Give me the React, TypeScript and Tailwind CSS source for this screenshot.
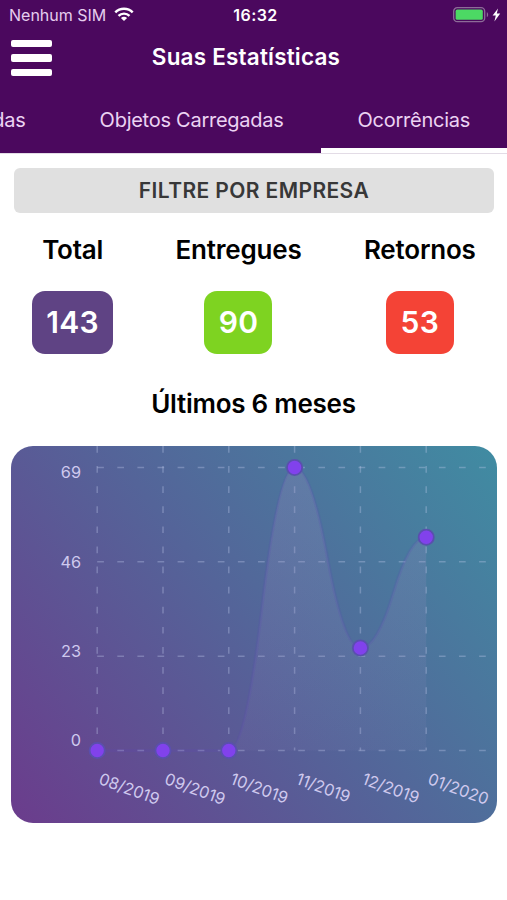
import clsx from 'clsx';

type Stat = { label: string; value: number; width: string; box: string };

const STATS: Stat[] = [
  { label: 'Total', value: 143, width: 'w-[81px]', box: 'w-[81px] bg-[#5f4384]' },
  { label: 'Entregues', value: 90, width: 'w-[126px]', box: 'w-[68px] bg-[#7ed321]' },
  { label: 'Retornos', value: 53, width: 'w-[112px]', box: 'w-[68px] bg-[#f44336]' },
];

const TABS = ['das', 'Objetos Carregadas', 'Ocorrências'];

const MONTHS = [
  { label: '08/2019', value: 0 },
  { label: '09/2019', value: 0 },
  { label: '10/2019', value: 0 },
  { label: '11/2019', value: 69 },
  { label: '12/2019', value: 25 },
  { label: '01/2020', value: 52 },
];

const WIDTH = 486;
const HEIGHT = 377;
const LEFT = 86.2;
const STEP = 65.8;
const TOP = 21.5;
const BASE = 304.5;
const Y_LABELS = [
  { text: '69', y: 32 },
  { text: '46', y: 121.5 },
  { text: '23', y: 210.5 },
  { text: '0', y: 299.5 },
];

const points = MONTHS.map((m, i) => ({
  x: LEFT + i * STEP,
  y: BASE - (m.value / 69) * (BASE - TOP),
}));

function bezierLine() {
  return points.slice(1).reduce((path, next, i) => {
    const prev = points[i];
    const midX = (prev.x + next.x) / 2;
    const midY = (prev.y + next.y) / 2;
    return `${path} Q ${(midX + prev.x) / 2} ${prev.y} ${midX} ${midY} Q ${(midX + next.x) / 2} ${next.y} ${next.x} ${next.y}`;
  }, `M ${points[0].x} ${points[0].y}`);
}

function StatusBar() {
  return (
    <div className="grid h-[30px] grid-cols-3 items-center pr-[5px] pl-[9px] text-[16px] leading-[30px]">
      <div className="flex items-center gap-[9px] text-[#e6cdee]">
        <span className="whitespace-nowrap">Nenhum SIM</span>
        <svg width="20" height="15" viewBox="0 0 20 15" className="-mt-[2px] -ml-[1px] fill-none stroke-white">
          <path d="M1.3 5.4C6 .6 14 .6 18.7 5.4" strokeWidth="2.5" />
          <path d="M4.5 8.8C7.5 5.9 12.5 5.9 15.5 8.8" strokeWidth="2.4" />
          <path d="M10 14 6.9 11C8.6 9.4 11.4 9.4 13.1 11Z" className="fill-white stroke-none" />
        </svg>
      </div>
      <span className="text-center font-semibold tracking-[0.4px] text-white">16:32</span>
      <svg width="50" height="16" viewBox="0 0 50 16" className="-mr-[1px] justify-self-end">
        <rect x=".7" y=".7" width="31" height="14" rx="3.6" fill="none" stroke="#8d6c98" strokeWidth="1.3" />
        <rect x="2.6" y="2.6" width="27.2" height="10.2" rx="1.6" fill="#4cd964" />
        <path d="M33.8 5.3c1.8.6 1.8 4.2 0 4.8Z" fill="#8d6c98" />
        <path d="M45 1.4 39.6 8.4h3.2L41.4 14.4 47.2 6.6h-3.4Z" fill="#fff" />
      </svg>
    </div>
  );
}

function Header() {
  return (
    <header className="flex h-[153px] flex-col overflow-hidden bg-[#4b085e]">
      <StatusBar />
      <div className="grid h-[54px] grid-cols-[52px_1fr_67px] items-center">
        <button type="button" aria-label="Menu" className="mt-[2px] ml-[11px] flex w-[41px] flex-col gap-[7px]">
          <span className="h-[7.5px] rounded-[2px] bg-white" />
          <span className="h-[7.5px] rounded-[2px] bg-white" />
          <span className="h-[7.5px] rounded-[2px] bg-white" />
        </button>
        <h1 className="text-center text-[22.5px] font-semibold tracking-[0.2px] text-white">Suas Estatísticas</h1>
      </div>
      <nav className="flex h-[69px] justify-end">
        {TABS.map((tab, i) => (
          <div
            key={tab}
            className={clsx(
              'flex h-full shrink-0 items-center justify-center border-b-[5px] px-[37px] pt-[8px] text-[20px] tracking-[-0.26px] whitespace-nowrap text-[#ecd3f3]',
              i === TABS.length - 1 ? 'border-white' : 'border-transparent',
            )}
          >
            {tab}
          </div>
        ))}
      </nav>
    </header>
  );
}

function StatColumn({ stat }: { stat: Stat }) {
  return (
    <div className={clsx('flex flex-col items-center gap-[24px]', stat.width)}>
      <h2 className="text-[26px] leading-[34px] font-semibold tracking-[-0.2px] whitespace-nowrap text-black">
        {stat.label}
      </h2>
      <div
        className={clsx(
          'flex h-[63px] items-center justify-center rounded-[13px] text-[30px] font-semibold tracking-[0.3px] text-white',
          stat.box,
        )}
      >
        {stat.value}
      </div>
    </div>
  );
}

function MonthlyChart() {
  const line = bezierLine();
  const last = points[points.length - 1];

  return (
    <svg width={WIDTH} height={HEIGHT} viewBox={`0 0 ${WIDTH} ${HEIGHT}`} className="rounded-[22px]">
      <defs>
        <linearGradient id="background" gradientUnits="userSpaceOnUse" x1="0" y1={HEIGHT} x2={WIDTH} y2="0">
          <stop offset="0" stopColor="#6b3c8c" />
          <stop offset="0.5" stopColor="#546499" />
          <stop offset="1" stopColor="#408ca2" />
        </linearGradient>
        <linearGradient id="area" gradientUnits="userSpaceOnUse" x1="0" y1="0" x2="0" y2={HEIGHT}>
          <stop offset="0" stopColor="#9c8cc0" stopOpacity="0.28" />
          <stop offset="1" stopColor="#9c8cc0" stopOpacity="0.02" />
        </linearGradient>
      </defs>
      <rect width={WIDTH} height={HEIGHT} fill="url(#background)" />

      <g stroke="#c4cdf0" strokeOpacity="0.33" strokeWidth="1.5" strokeDasharray="6.7 13.4">
        {[0, 1, 2, 3].map((i) => {
          const y = TOP + (i * (BASE - TOP)) / 3;
          return <line key={i} x1={LEFT} x2="479" y1={y} y2={y} />;
        })}
        {points.map((p) => (
          <line key={p.x} x1={p.x} x2={p.x} y1="0" y2={BASE} />
        ))}
      </g>

      <path d={`${line} L ${last.x} ${BASE} L ${LEFT} ${BASE} Z`} fill="url(#area)" />
      <path d={line} fill="none" stroke="#6047b5" strokeOpacity="0.18" strokeWidth="3" />

      {points.map((p) => (
        <circle key={p.x} cx={p.x} cy={p.y} r="7.6" fill="#8142ec" stroke="#5a4fae" strokeWidth="1.8" />
      ))}

      <g fill="#cfc9ee" fontSize="16.3">
        {Y_LABELS.map((l) => (
          <text key={l.text} x="70" y={l.y} textAnchor="end">
            {l.text}
          </text>
        ))}
        {points.map((p, i) => (
          <text key={p.x} transform={`translate(${p.x + 0.5} ${BASE + 33}) rotate(20)`}>
            {MONTHS[i].label}
          </text>
        ))}
      </g>
    </svg>
  );
}

export default function App() {
  return (
    <div className="h-[900px] w-[507px] overflow-hidden bg-white font-['Inter',sans-serif]">
      <Header />
      <div className="h-px bg-[#e3dce6]" />
      <main className="flex flex-col">
        <button
          type="button"
          className="mt-[14px] mr-[13px] ml-[14px] h-[45px] rounded-[6px] bg-[#e0e0e0] text-[21px] font-semibold tracking-[0.4px] text-[#383838]"
        >
          FILTRE POR EMPRESA
        </button>
        <section className="mt-[20px] flex justify-around pl-[1px]">
          {STATS.map((stat) => (
            <StatColumn key={stat.label} stat={stat} />
          ))}
        </section>
        <h2 className="mt-[33px] text-center text-[26px] leading-[34px] font-semibold tracking-[-0.25px] text-black">
          Últimos 6 meses
        </h2>
        <div className="mt-[25px] ml-[11px]">
          <MonthlyChart />
        </div>
      </main>
    </div>
  );
}
